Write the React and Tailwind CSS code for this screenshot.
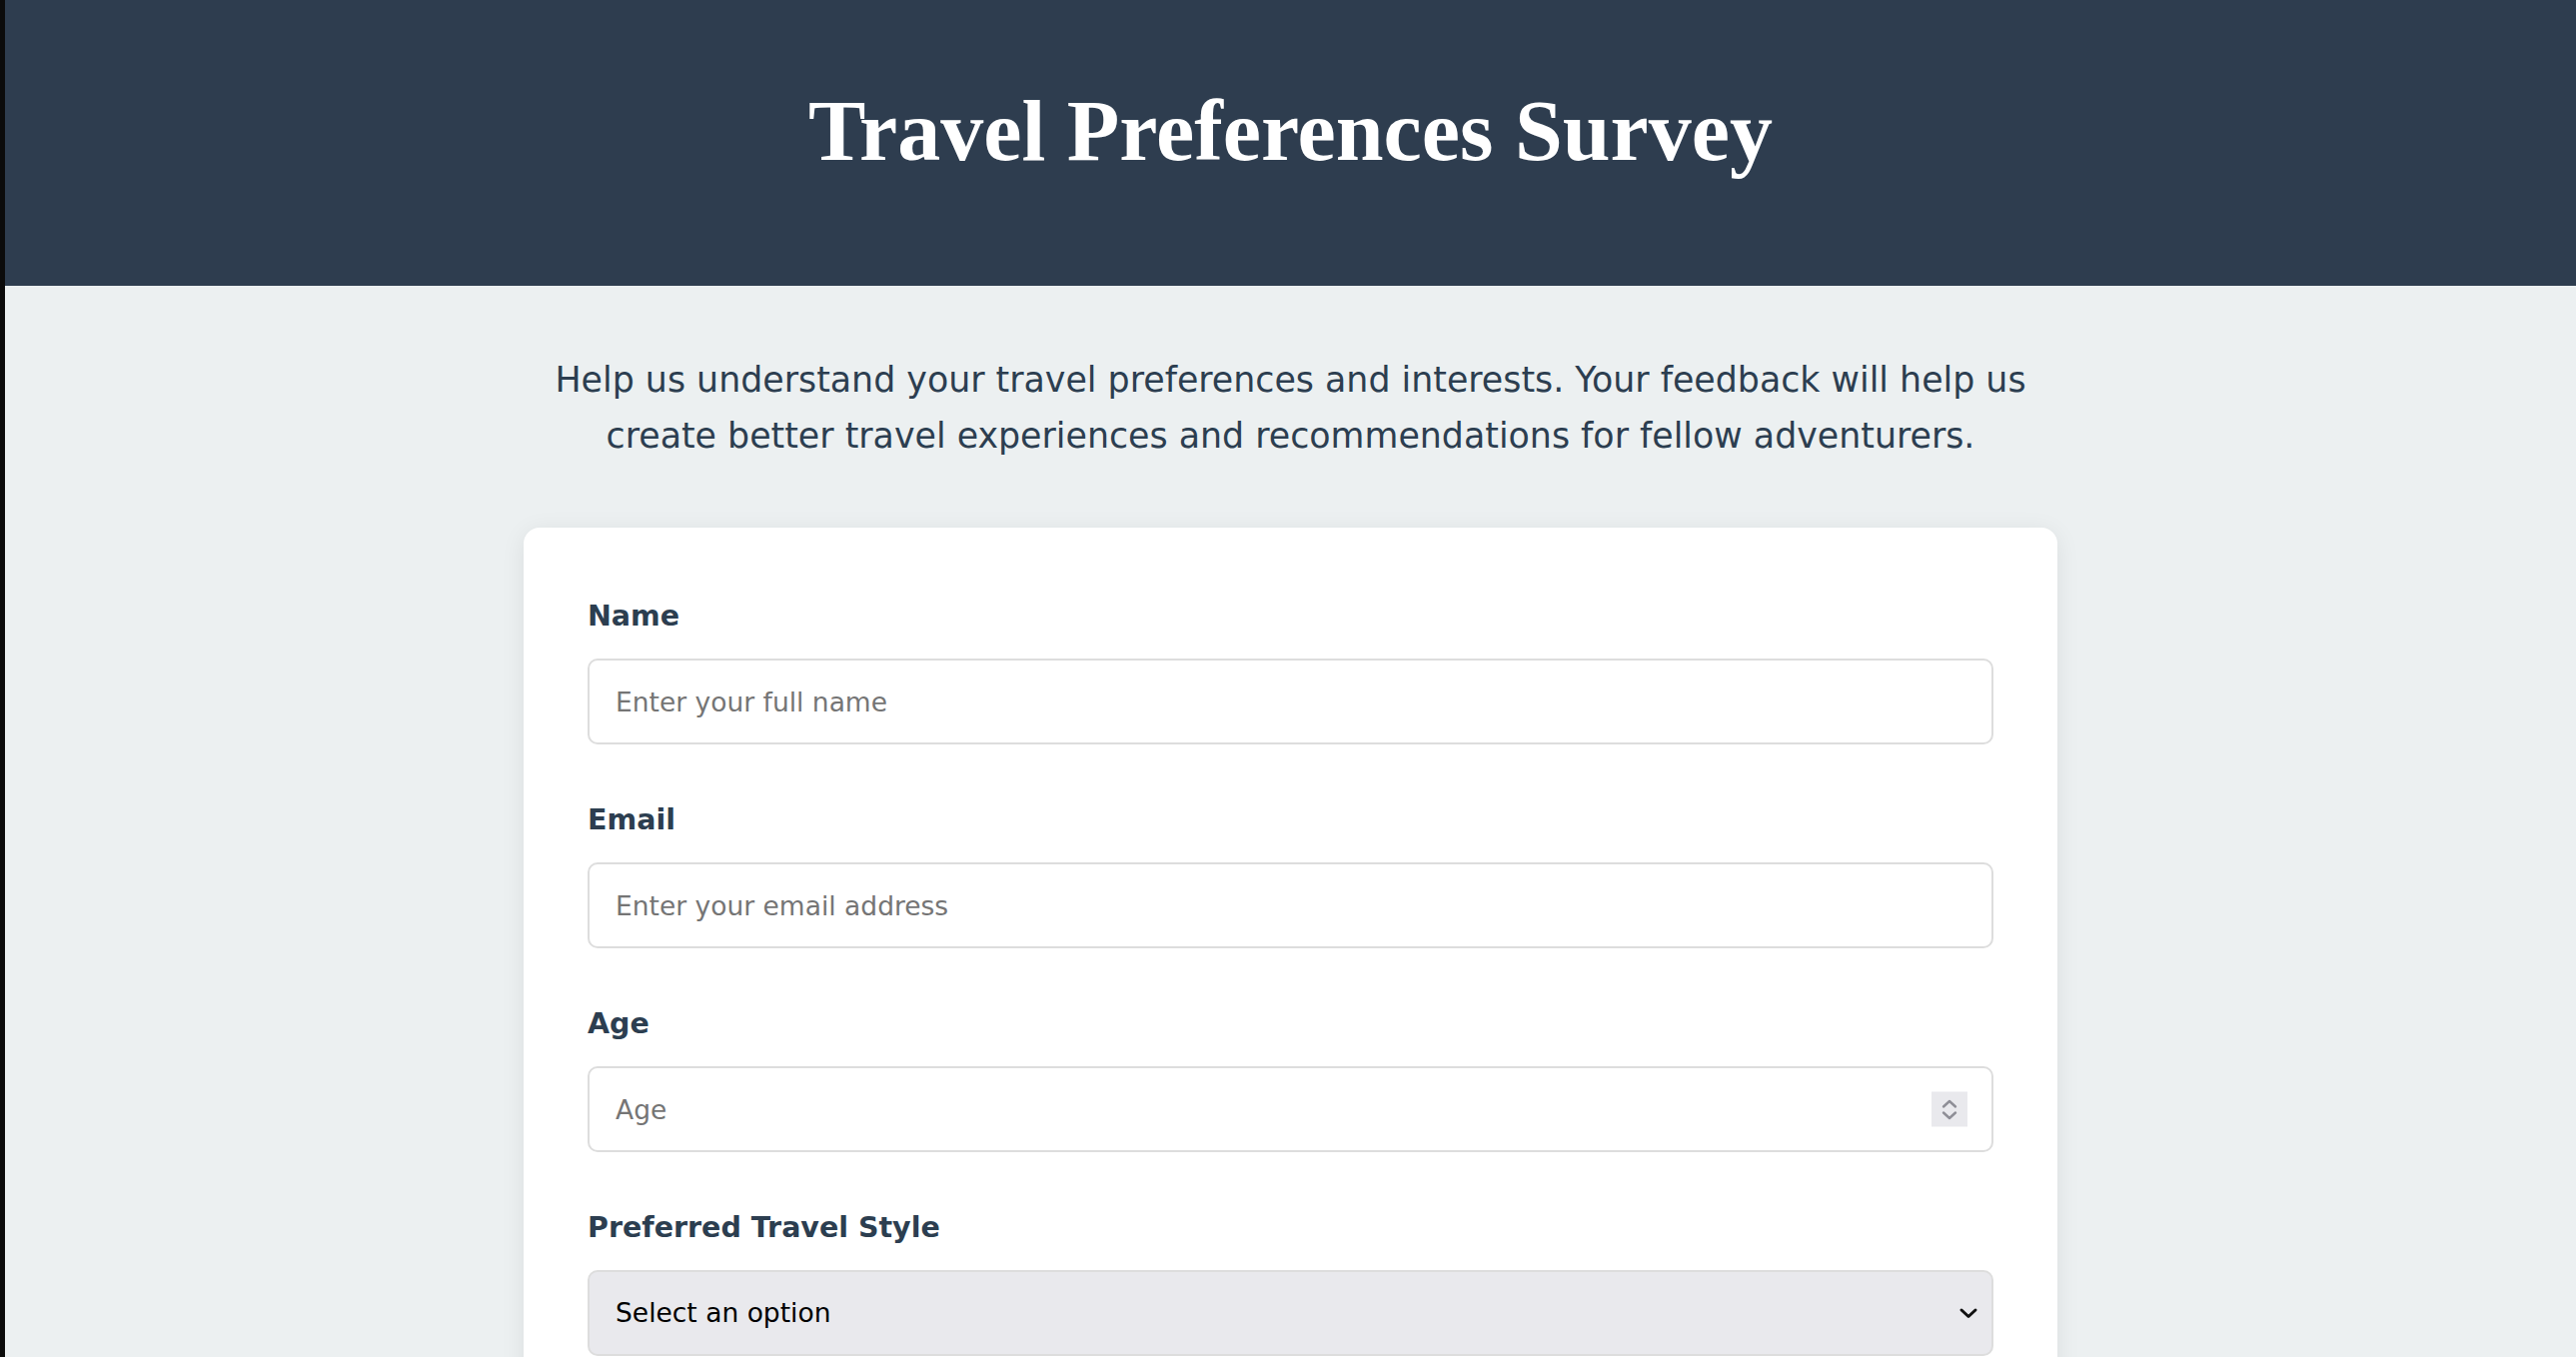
import React from "react";

const sans = "font-['DejaVu_Sans','Liberation_Sans',sans-serif]";

function Field({ label, children }) {
  return (
    <div className="mb-[59px]">
      <label className={`block text-[28.5px] leading-[34px] font-bold text-[#2c3e50] mb-[25px] ${sans}`}>
        {label}
      </label>
      {children}
    </div>
  );
}

const inputCls = `block w-full h-[86px] rounded-[10px] border-2 border-[#dddddd] bg-white px-[26px] text-[26.5px] text-[#2c3e50] placeholder:text-[#757575] outline-none ${sans}`;

export default function App() {
  return (
    <div className="flex min-h-screen bg-[#ecf0f1]">
      <div className="w-[5px] shrink-0 bg-[#0b0b0b]" />
      <div className="flex-1 min-w-0">
        <header className="h-[286px] bg-[#2e3d4f] flex items-center justify-center">
          <h1 className="font-['Liberation_Serif',serif] font-bold text-white text-[86px] leading-none -mt-[24px]">
            Travel Preferences Survey
          </h1>
        </header>
        <main className="flex flex-col items-center pb-20">
          <p className={`mt-[66px] max-w-[1560px] text-center text-[34.8px] leading-[56px] text-[#2c3e50] ${sans}`}>
            Help us understand your travel preferences and interests. Your feedback will help us create better travel experiences and recommendations for fellow adventurers.
          </p>
          <div className="mt-[64px] w-[1535px] rounded-[16px] bg-white shadow-[0_4px_24px_rgba(0,0,0,0.08)] px-[64px] pt-[72px] pb-[64px]">
            <Field label="Name">
              <input type="text" placeholder="Enter your full name" className={inputCls} />
            </Field>
            <Field label="Email">
              <input type="email" placeholder="Enter your email address" className={inputCls} />
            </Field>
            <Field label="Age">
              <div className="relative">
                <input type="text" placeholder="Age" className={inputCls} />
                <div className="absolute right-[26px] top-1/2 -translate-y-1/2 w-[36px] h-[35px] bg-[#e9e9ed] flex items-center justify-center">
                  <svg width="18" height="24" viewBox="0 0 18 24" fill="none" stroke="#8e8e96" strokeWidth="2.4" strokeLinecap="round" strokeLinejoin="round">
                    <path d="M3 9 L9 3.5 L15 9" />
                    <path d="M3 15 L9 20.5 L15 15" />
                  </svg>
                </div>
              </div>
            </Field>
            <Field label="Preferred Travel Style">
              <div className="relative">
                <select className={`block w-full h-[86px] appearance-none rounded-[10px] border-2 border-[#dddddd] bg-[#e9e9ed] px-[26px] text-[26.5px] text-black outline-none ${sans}`} defaultValue="">
                  <option value="">Select an option</option>
                  <option value="adventure">Adventure</option>
                  <option value="relaxation">Relaxation</option>
                  <option value="cultural">Cultural</option>
                </select>
                <svg className="pointer-events-none absolute right-[14px] top-1/2 -translate-y-1/2" width="22" height="14" viewBox="0 0 22 14" fill="none" stroke="#111" strokeWidth="3" strokeLinecap="round" strokeLinejoin="round">
                  <path d="M4 4 L11 10.5 L18 4" />
                </svg>
              </div>
            </Field>
            <Field label="Favorite Destinations">
              <input type="text" placeholder="e.g. Japan, Italy, Peru" className={inputCls} />
            </Field>
          </div>
        </main>
      </div>
    </div>
  );
}
